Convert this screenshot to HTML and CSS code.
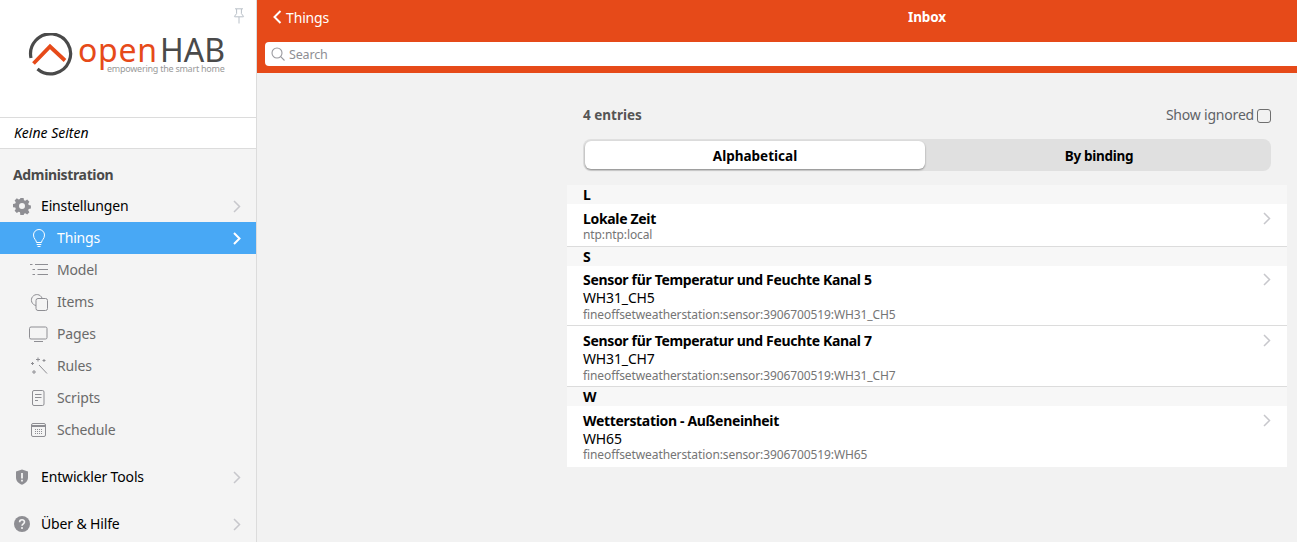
FILE: index.html
```html
<!DOCTYPE html>
<html lang="en">
<head>
  <meta charset="UTF-8" />
  <title>openHAB - Inbox</title>
  <link rel="stylesheet" href="styles.css">
</head>
<body>
  <aside class="panel">
    <div class="panel-top">
      <svg class="pin" width="12" height="16" viewBox="0 0 12 16" fill="none" stroke="#b9c0c8" stroke-width="1">
        <path d="M2 .8h8M3.600 1v4.600L1.600 8.200v.6h8.800v-.6L8.400 5.600V1M6 9v6.500"/>
      </svg>
      <div class="logo">
        <svg width="46" height="46" viewBox="0 0 46 46" fill="none">
          <path d="M3 25A20 20 0 1 1 9.500 36" stroke="#4a4a4a" stroke-width="3.200"/>
          <path d="M5.500 30.500 22 13.500 37 27.500" stroke="#e64a19" stroke-width="3.800"/>
        </svg>
        <div class="logo-text">
          <div class="logo-name"><span class="logo-open">open</span><span class="logo-hab">HAB</span></div>
          <div class="logo-tag">empowering the smart home</div>
        </div>
      </div>
    </div>
    <div class="no-pages">Keine Seiten</div>
    <div class="admin-title">Administration</div>
    <div class="menu-row">
      <svg class="main-icon" width="18" height="18" viewBox="0 0 18 18"><path fill="#8e8e93" fill-rule="evenodd" d="M7.400 1h3.200l.4 2.200 1.300.6 1.900-1.300 2.200 2.300-1.200 1.900.5 1.300 2.200.4v3.200l-2.200.4-.5 1.300 1.200 1.900-2.200 2.200-1.900-1.200-1.300.5-.4 2.200H7.400L7 15.300l-1.300-.5-1.900 1.200-2.200-2.200 1.200-1.900-.5-1.300L0 10.200V7l2.300-.4.500-1.300-1.200-1.900 2.200-2.200 1.900 1.200L7 1.900zM9 6a3 3 0 1 0 0 6 3 3 0 0 0 0-6z"/></svg>
      <span class="menu-label">Einstellungen</span>
      <svg class="chev" width="8" height="13" viewBox="0 0 8 13" fill="none"><path d="M1 1l5.500 5.500L1 12"/></svg>
    </div>
    <div class="sub-row active">
      <svg class="sub-icon" width="20" height="20" viewBox="0 0 20 20" fill="none" stroke="currentColor"><path d="M7.500 14.500c0-2.500-3-3.500-3-7.500a5.500 5.500 0 0 1 11 0c0 4-3 5-3 7.500zM7.700 16.500h4.600M8.500 18.500h3"/></svg>
      <span>Things</span>
      <svg class="chev" width="8" height="13" viewBox="0 0 8 13" fill="none"><path d="M1 1l5.500 5.500L1 12"/></svg>
    </div>
    <div class="sub-row">
      <svg class="sub-icon" width="20" height="20" viewBox="0 0 20 20" fill="none" stroke="#8e8e93"><path d="M6 4.500h13M8.500 9.500h10.500M8.500 14.500h10.500M1 4.500h2.500M3.500 9.500h2.500M3.500 14.500h2.500"/></svg>
      <span>Model</span>
    </div>
    <div class="sub-row">
      <svg class="sub-icon" width="20" height="20" viewBox="0 0 20 20" fill="none" stroke="#8e8e93"><path d="M7 13.500a5.500 5.500 0 1 1 6-7.500"/><rect x="7" y="6.500" width="11.500" height="12" rx="2"/></svg>
      <span>Items</span>
    </div>
    <div class="sub-row">
      <svg class="sub-icon" width="20" height="20" viewBox="0 0 20 20" fill="none" stroke="#8e8e93"><rect x=".5" y="3" width="17.500" height="12" rx="1.500"/><path d="M5 17.500h9"/></svg>
      <span>Pages</span>
    </div>
    <div class="sub-row">
      <svg class="sub-icon" width="20" height="20" viewBox="0 0 20 20" fill="none" stroke="#8e8e93"><path d="M10 9l8 8.500M9 1.500v4M7 3.500h4M3.500 6v3M2 7.500h3M15 3v3M13.500 4.500h3M5 14v4M3 16h4" /></svg>
      <span>Rules</span>
    </div>
    <div class="sub-row">
      <svg class="sub-icon" width="20" height="20" viewBox="0 0 20 20" fill="none" stroke="#8e8e93"><rect x="3.500" y="2.500" width="11.500" height="15" rx="1.500"/><path d="M6 6.500h6.500M6 9.500h6.500M6 12.500h3"/></svg>
      <span>Scripts</span>
    </div>
    <div class="sub-row">
      <svg class="sub-icon" width="20" height="20" viewBox="0 0 20 20" fill="none" stroke="#8e8e93"><rect x="2.500" y="3.500" width="14" height="13" rx="1.500"/><path d="M2.500 6h14" stroke-width="2"/><path d="M6 9.500h8M6 11.500h8M6 13.500h8" stroke-dasharray="1 1"/></svg>
      <span>Schedule</span>
    </div>
    <div class="menu-row tools">
      <svg class="main-icon" width="18" height="18" viewBox="0 0 18 18"><path fill="#8e8e93" fill-rule="evenodd" d="M9 1.500l6 2v6c0 3.500-2.500 6-6 7.200-3.500-1.200-6-3.700-6-7.200v-6zM8.100 5v5.500h1.800V5zm0 6.700v1.800h1.800v-1.800z"/></svg>
      <span class="menu-label">Entwickler Tools</span>
      <svg class="chev" width="8" height="13" viewBox="0 0 8 13" fill="none"><path d="M1 1l5.500 5.500L1 12"/></svg>
    </div>
    <div class="menu-row help">
      <svg class="main-icon" width="18" height="18" viewBox="0 0 18 18"><circle cx="9" cy="9" r="8" fill="#8e8e93"/><path d="M6.600 7.200c0-3.200 4.900-3.200 4.900-.2 0 1.800-2.500 1.800-2.500 3.700" fill="none" stroke="#f4f4f4" stroke-width="1.600"/><circle cx="9" cy="13" r="1" fill="#f4f4f4"/></svg>
      <span class="menu-label">Über &amp; Hilfe</span>
      <svg class="chev" width="8" height="13" viewBox="0 0 8 13" fill="none"><path d="M1 1l5.500 5.500L1 12"/></svg>
    </div>
  </aside>

  <main class="page">
    <header class="topbar">
      <div class="navbar">
        <div class="back">
          <svg width="9" height="14" viewBox="0 0 9 14" fill="none" stroke="#fff" stroke-width="2"><path d="M7.500 1L1.500 7l6 6"/></svg>
          <span>Things</span>
        </div>
        <div class="title">Inbox</div>
      </div>
      <div class="search">
        <svg width="14" height="14" viewBox="0 0 14 14" fill="none" stroke="#9a9a9f" stroke-width="1.100"><circle cx="6" cy="6" r="5"/><path d="M9.700 9.700L13.500 13.500"/></svg>
        <span>Search</span>
      </div>
    </header>

    <div class="content">
      <div class="toolbar">
        <span class="count">4 entries</span>
        <label class="ignored"><span class="ignored-text">Show ignored</span><span class="check"></span></label>
      </div>
      <div class="segmented">
        <div class="seg on">Alphabetical</div>
        <div class="seg">By binding</div>
      </div>

      <div class="group-title">L</div>
      <div class="item short">
        <div class="item-name">Lokale Zeit</div>
        <div class="item-uid">ntp:ntp:local</div>
        <svg class="chev" width="8" height="13" viewBox="0 0 8 13" fill="none"><path d="M1 1l5.500 5.500L1 12"/></svg>
      </div>

      <div class="group-title">S</div>
      <div class="item tight">
        <div class="item-name">Sensor für Temperatur und Feuchte Kanal 5</div>
        <div class="item-sub">WH31_CH5</div>
        <div class="item-uid">fineoffsetweatherstation:sensor:3906700519:WH31_CH5</div>
        <svg class="chev" width="8" height="13" viewBox="0 0 8 13" fill="none"><path d="M1 1l5.500 5.500L1 12"/></svg>
      </div>
      <div class="item">
        <div class="item-name">Sensor für Temperatur und Feuchte Kanal 7</div>
        <div class="item-sub">WH31_CH7</div>
        <div class="item-uid">fineoffsetweatherstation:sensor:3906700519:WH31_CH7</div>
        <svg class="chev" width="8" height="13" viewBox="0 0 8 13" fill="none"><path d="M1 1l5.500 5.500L1 12"/></svg>
      </div>

      <div class="group-title">W</div>
      <div class="item end">
        <div class="item-name">Wetterstation - Außeneinheit</div>
        <div class="item-sub">WH65</div>
        <div class="item-uid">fineoffsetweatherstation:sensor:3906700519:WH65</div>
        <svg class="chev" width="8" height="13" viewBox="0 0 8 13" fill="none"><path d="M1 1l5.500 5.500L1 12"/></svg>
      </div>
    </div>
  </main>
</body>
</html>
```

FILE: styles.css
```css
* {
  box-sizing: border-box;
}
html, body {
  height: 100%;
}
body {
  margin: 0;
  display: flex;
  height: 542px;
  overflow: hidden;
  font-family: "Noto Sans", "Open Sans", sans-serif;
  font-size: 14px;
  letter-spacing: -.15px;
  color: #000;
  background: #f2f2f2;
}

/* sidebar */
.panel {
  width: 257px;
  flex: none;
  background: #f4f4f4;
  border-right: 1px solid #dcdcdc;
}
.panel-top {
  height: 118px;
  background: #fff;
  padding: 33px 0 0 28px;
  position: relative;
  border-bottom: 1px solid #dcdcdc;
}
.pin {
  position: absolute;
  top: 8px;
  right: 11px;
}
.logo {
  display: flex;
  gap: 4px;
}
.logo-text {
  margin-top: 2px;
  width: 147px;
}
.logo-name {
  display: flex;
  font-size: 32px;
  line-height: 29px;
  letter-spacing: 0;
}
.logo-open {
  width: 82px;
  color: #e64a19;
  letter-spacing: .7px;
}
.logo-hab {
  color: #4a4a4a;
}
.logo-tag {
  font-size: 9px;
  line-height: 9px;
  color: #9a9a9a;
  margin-left: 29px;
  letter-spacing: -.25px;
  white-space: nowrap;
}
.no-pages {
  height: 31px;
  background: #fff;
  border-bottom: 1px solid #dcdcdc;
  padding-left: 14px;
  line-height: 30px;
  font-style: italic;
  letter-spacing: 0;
}
.admin-title {
  font-weight: 700;
  letter-spacing: -.35px;
  color: #4a4a4a;
  padding: 16px 0 0 13px;
  line-height: 19px;
  height: 41px;
}
.menu-row {
  height: 32px;
  display: flex;
  align-items: center;
  padding: 0 15px 0 13px;
}
.menu-label {
  margin-left: 10px;
  flex: 1;
  padding-bottom: 2px;
}
.tools {
  margin-top: 15px;
}
.help {
  margin-top: 15px;
}
.sub-row {
  height: 32px;
  display: flex;
  align-items: center;
  padding: 0 15px 0 29px;
  color: #6b6b6b;
}
.sub-row span {
  margin-left: 8px;
  flex: 1;
  padding-bottom: 2px;
}
.sub-row.active {
  background: #48a8f5;
  color: #fff;
}
.sub-row.active .chev path {
  stroke: #fff;
  stroke-width: 2;
}
.chev path {
  stroke: #c7c7cc;
  stroke-width: 1.500;
}

/* main area */
.page {
  flex: 1;
  min-width: 0;
}
.topbar {
  height: 73px;
  background: #e64a19;
  padding-bottom: 7px;
}
.navbar {
  height: 42px;
  display: flex;
  color: #fff;
  padding-bottom: 8px;
  align-items: center;
}
.back {
  width: 310px;
  display: flex;
  align-items: center;
  gap: 4px;
  padding-left: 16px;
}
.title {
  width: 720px;
  text-align: center;
  font-weight: 700;
  font-size: 13.500px;
  letter-spacing: -.1px;
}
.search {
  margin: 0 0 0 8px;
  height: 24px;
  background: #fff;
  border-radius: 4px 0 0 4px;
  display: flex;
  align-items: center;
  gap: 4px;
  padding-left: 6px;
  color: #8e8e93;
  font-size: 12.500px;
}

.content {
  width: 720px;
  margin: 0 10px 0 auto;
}
.toolbar {
  display: flex;
  justify-content: space-between;
  align-items: center;
  padding: 0 16px;
  margin-top: 31px;
  height: 22px;
  color: #555;
}
.count {
  font-weight: 700;
  font-size: 13.500px;
  letter-spacing: 0;
}
.ignored {
  display: flex;
  align-items: center;
  gap: 3px;
  color: #5f6368;
}
.ignored-text {
  margin-bottom: 2px;
  letter-spacing: -.2px;
}
.check {
  width: 14px;
  height: 14px;
  margin-top: 1px;
  border: 1px solid #6f6f6f;
  border-radius: 3px;
}
.segmented {
  display: flex;
  margin: 13px 16px 14px;
  height: 32px;
  padding: 2px;
  border-radius: 8px;
  background: #e0e0e0;
}
.seg {
  flex: 1;
  display: flex;
  align-items: center;
  justify-content: center;
  padding: 2px 0 0 4px;
  font-weight: 700;
  font-size: 13.500px;
  letter-spacing: -.3px;
  border-radius: 6px;
}
.seg.on {
  flex: none;
  width: 340px;
  padding-left: 0;
  letter-spacing: 0;
  background: #fff;
  box-shadow: 0 1px 2px rgba(0, 0, 0, .4);
}
.group-title {
  height: 19px;
  background: #f7f7f7;
  padding-left: 16px;
  line-height: 19px;
  font-weight: 700;
}
.item {
  position: relative;
  background: #fff;
  padding: 6px 16px 0;
  height: 61px;
  border-bottom: 1px solid #dcdcdc;
}
.item.short {
  height: 43px;
}
.item.tight {
  height: 60px;
  padding-top: 5px;
}
.item.tight .chev {
  top: 7px;
}
.item.end {
  border-bottom: 0;
}
.item-name {
  font-weight: 700;
  letter-spacing: -.33px;
  line-height: 18px;
}
.item-sub {
  line-height: 18px;
  margin-bottom: 1px;
}
.item.end .item-sub {
  margin-bottom: 0;
}
.item-uid {
  font-size: 12px;
  line-height: 14px;
  color: #757575;
  letter-spacing: -.1px;
}
.item .chev {
  position: absolute;
  top: 8px;
  right: 16px;
}
```
